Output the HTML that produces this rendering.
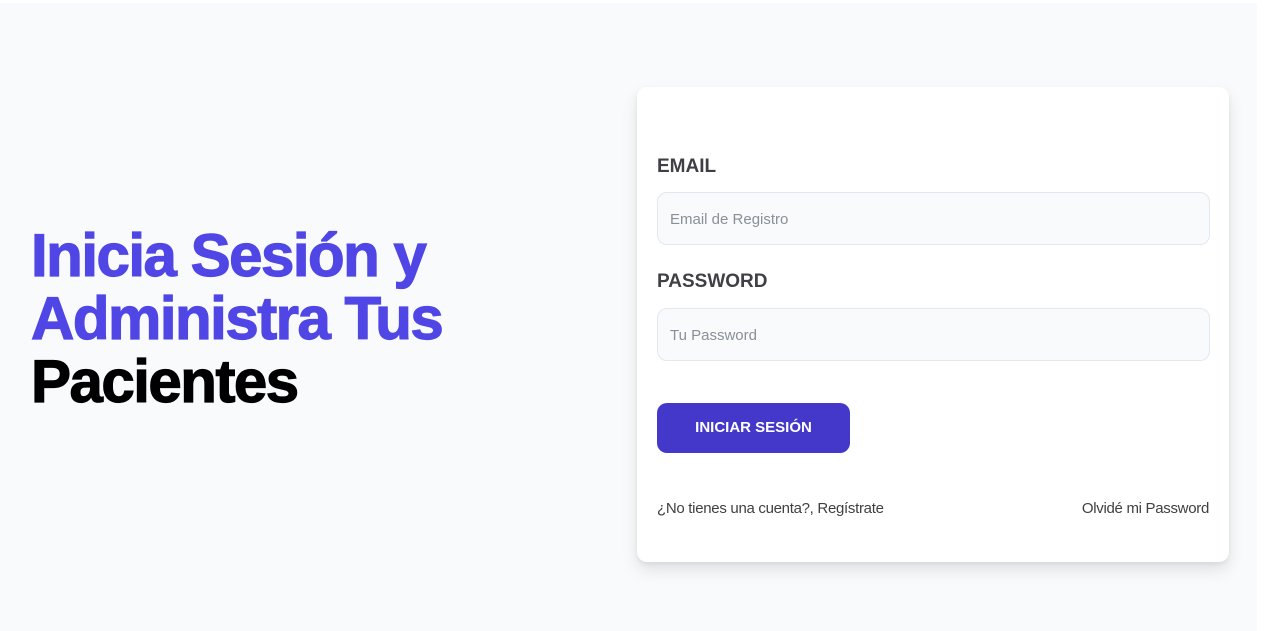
<!DOCTYPE html>
<html><head><meta charset="utf-8"><style>
html,body{margin:0;padding:0}
body{width:1265px;height:631px;background:#fff;font-family:"Liberation Sans",sans-serif;position:relative;overflow:hidden}
.bg{position:absolute;left:0;top:3px;width:1257px;height:628px;background:#f8fafc}
h1{position:absolute;left:31px;top:224px;margin:0;font-size:60px;line-height:63px;font-weight:bold;letter-spacing:-1.5px;color:#4f46e5;-webkit-text-stroke:1.2px #4f46e5}
h1 span{color:#000;-webkit-text-stroke:1.2px #000}
.card{position:absolute;left:637px;top:87px;width:592px;height:475px;background:#fff;border-radius:10px;box-shadow:0 8px 16px rgba(0,0,0,.1),0 2px 4px rgba(0,0,0,.06)}
label{position:absolute;left:20px;font-size:19px;font-weight:bold;color:#3f3f46}
.inp{position:absolute;left:20px;width:553px;height:53px;background:#f8fafc;border:1px solid #e2e8f0;border-radius:10px;box-sizing:border-box;font-size:15px;color:#8a8f98;padding-left:12px;line-height:53px}
.btn{position:absolute;left:20px;top:316px;width:193px;height:50px;background:#4338ca;border-radius:10px;color:#fff;font-weight:bold;font-size:15px;text-align:center;line-height:50px}
.lk{position:absolute;top:413px;font-size:15px;letter-spacing:-0.3px;color:#404040}
</style></head><body>
<div class="bg"></div>
<h1>Inicia Sesión y<br>Administra Tus<br><span>Pacientes</span></h1>
<div class="card">
<label style="top:69px">EMAIL</label>
<div class="inp" style="top:105px">Email de Registro</div>
<label style="top:184px">PASSWORD</label>
<div class="inp" style="top:221px">Tu Password</div>
<div class="btn">INICIAR SESIÓN</div>
<div class="lk" style="left:20px">¿No tienes una cuenta?, Regístrate</div>
<div class="lk" style="right:20px">Olvidé mi Password</div>
</div>
</body></html>
